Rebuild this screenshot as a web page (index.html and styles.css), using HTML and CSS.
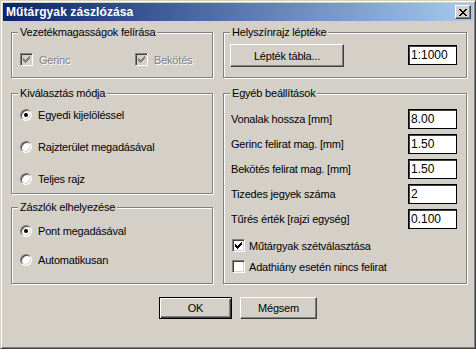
FILE: index.html
```html
<!DOCTYPE html>
<html lang="hu">
<head>
    <meta charset="UTF-8">
    <title>Műtárgyak zászlózása</title>
    <link rel="stylesheet" href="styles.css">
</head>
<body>
<div class="window">
    <div class="titlebar">
        <span class="title">Műtárgyak zászlózása</span>
        <button class="close" title="Bezárás">
            <svg width="8" height="7" viewBox="0 0 8 7">
                <path d="M0 0h2v1H0zM6 0h2v1H6zM1 1h2v1H1zM5 1h2v1H5zM2 2h4v1H2zM3 3h2v1H3zM2 4h4v1H2zM1 5h2v1H1zM5 5h2v1H5zM0 6h2v1H0zM6 6h2v1H6z" fill="#000"/>
            </svg>
        </button>
    </div>

    <div class="content">
        <div class="col left">
            <div class="group g-vezetek">
                <span class="caption">Vezetékmagasságok felírása</span>
                <div class="check-row">
                    <label class="check disabled"><span class="box"><svg class="tick" width="7" height="7" viewBox="0 0 7 7"><path d="M0 2h1v3H0zM1 3h1v3H1zM2 4h1v3H2zM3 3h1v3H3zM4 2h1v3H4zM5 1h1v3H5zM6 0h1v3H6z"/></svg></span>Gerinc</label>
                    <label class="check disabled"><span class="box"><svg class="tick" width="7" height="7" viewBox="0 0 7 7"><path d="M0 2h1v3H0zM1 3h1v3H1zM2 4h1v3H2zM3 3h1v3H3zM4 2h1v3H4zM5 1h1v3H5zM6 0h1v3H6z"/></svg></span>Bekötés</label>
                </div>
            </div>

            <div class="group g-kivalasztas">
                <span class="caption">Kiválasztás módja</span>
                <label class="radio"><span class="dot on"></span>Egyedi kijelöléssel</label>
                <label class="radio"><span class="dot"></span>Rajzterület megadásával</label>
                <label class="radio"><span class="dot"></span>Teljes rajz</label>
            </div>

            <div class="group g-zaszlok">
                <span class="caption">Zászlók elhelyezése</span>
                <label class="radio"><span class="dot on"></span>Pont megadásával</label>
                <label class="radio"><span class="dot"></span>Automatikusan</label>
            </div>
        </div>

        <div class="col right">
            <div class="group g-lepetek">
                <span class="caption">Helyszínrajz léptéke</span>
                <button class="btn btn-lepetek">Lépték tábla...</button>
                <input class="field" type="text" value="1:1000">
            </div>

            <div class="group g-egyeb">
                <span class="caption">Egyéb beállítások</span>
                <div class="row"><span>Vonalak hossza [mm]</span><input class="field" type="text" value="8.00"></div>
                <div class="row"><span>Gerinc felirat mag. [mm]</span><input class="field" type="text" value="1.50"></div>
                <div class="row"><span>Bekötés felirat mag. [mm]</span><input class="field" type="text" value="1.50"></div>
                <div class="row"><span>Tizedes jegyek száma</span><input class="field" type="text" value="2"></div>
                <div class="row"><span>Tűrés érték [rajzi egység]</span><input class="field" type="text" value="0.100"></div>
                <label class="check first"><span class="box"><svg class="tick" width="7" height="7" viewBox="0 0 7 7"><path d="M0 2h1v3H0zM1 3h1v3H1zM2 4h1v3H2zM3 3h1v3H3zM4 2h1v3H4zM5 1h1v3H5zM6 0h1v3H6z"/></svg></span>Műtárgyak szétválasztása</label>
                <label class="check"><span class="box"></span>Adathiány esetén nincs felirat</label>
            </div>
        </div>
    </div>

    <div class="buttons">
        <button class="btn default">OK</button>
        <button class="btn cancel">Mégsem</button>
    </div>
</div>
</body>
</html>
```

FILE: styles.css
```css
body {
    margin: 0;
    padding: 0;
    font-family: "Liberation Sans", Arial, sans-serif;
    font-size: 11px;
    letter-spacing: -0.2px;
    color: #000;
    background-color: #d4d0c8;
}

.window {
    width: 476px;
    height: 349px;
    box-sizing: border-box;
    padding: 2px;
    background-color: #d4d0c8;
    border: 1px solid;
    border-color: #d4d0c8 #404040 #404040 #d4d0c8;
    box-shadow: inset 1px 1px 0 #fff, inset -1px -1px 0 #808080;
}

.titlebar {
    height: 18px;
    display: flex;
    align-items: center;
    justify-content: space-between;
    background: linear-gradient(to right, #0a246a, #a6caf0);
}

.title {
    color: #fff;
    font-weight: bold;
    font-size: 12px;
    letter-spacing: 0.1px;
    padding-left: 3px;
}

.close {
    width: 16px;
    height: 14px;
    margin-right: 2px;
    padding: 0;
    display: flex;
    align-items: center;
    justify-content: center;
    background-color: #d4d0c8;
    border: 1px solid;
    border-color: #fff #404040 #404040 #fff;
    box-shadow: inset -1px -1px 0 #808080;
}

.content {
    display: flex;
    gap: 10px;
    padding: 11px 0 0 8px;
}

.col {
    display: flex;
    flex-direction: column;
}

.left {
    width: 202px;
    gap: 15px;
}

.right {
    width: 244px;
    gap: 15px;
}

/* etched group box */
.group {
    position: relative;
    box-sizing: border-box;
    border: 1px solid #808080;
    box-shadow: inset 1px 1px 0 #fff, 1px 1px 0 #fff;
}

.caption {
    position: absolute;
    top: -7px;
    left: 6px;
    padding: 0 2px;
    line-height: 13px;
    background-color: #d4d0c8;
}

.g-vezetek {
    height: 46px;
    padding: 20px 0 0 8px;
}

.check-row {
    display: grid;
    grid-template-columns: 115px auto;
}

.g-kivalasztas {
    height: 101px;
    margin-bottom: -2px;
    padding: 13px 0 0 8px;
    display: flex;
    flex-direction: column;
    gap: 16px;
}

.g-zaszlok {
    height: 77px;
    padding: 15px 0 0 8px;
    display: flex;
    flex-direction: column;
    gap: 13px;
}

.radio {
    display: flex;
    align-items: center;
    gap: 6px;
    height: 16px;
}

.dot {
    position: relative;
    width: 10px;
    height: 10px;
    border-radius: 50%;
    background-color: #fff;
    border: 1px solid;
    border-color: #808080 #fff #fff #808080;
    box-shadow: inset 1px 1px 0 #404040, inset -1px -1px 0 #d4d0c8;
}

.dot.on::after {
    content: "";
    position: absolute;
    left: 3px;
    top: 3px;
    width: 4px;
    height: 4px;
    border-radius: 50%;
    background-color: #000;
}

.check {
    display: flex;
    align-items: center;
    gap: 6px;
    height: 13px;
}

.box {
    width: 11px;
    height: 11px;
    display: flex;
    align-items: center;
    justify-content: center;
    background-color: #fff;
    border: 1px solid;
    border-color: #808080 #fff #fff #808080;
    box-shadow: inset 1px 1px 0 #404040, inset -1px -1px 0 #d4d0c8;
}

.tick {
    fill: #000;
}

.check.disabled {
    color: #808080;
    text-shadow: 1px 1px 0 #fff;
}

.check.disabled .box {
    background-color: #d4d0c8;
}

.check.disabled .tick {
    fill: #808080;
}

.g-lepetek {
    height: 46px;
    padding: 0 9px 0 6px;
    display: flex;
    align-items: center;
    justify-content: space-between;
}

.g-lepetek .btn-lepetek {
    width: 114px;
    height: 23px;
    margin-top: 1px;
}

.g-egyeb {
    height: 191px;
    padding: 15px 9px 0 7px;
    display: flex;
    flex-direction: column;
    gap: 5px;
}

.row {
    display: flex;
    align-items: center;
    justify-content: space-between;
    height: 20px;
}

.field {
    width: 49px;
    height: 20px;
    box-sizing: border-box;
    margin: 0;
    padding: 0 2px;
    font-family: "Liberation Sans", Arial, sans-serif;
    font-size: 12px;
    letter-spacing: 0;
    background-color: #fff;
    border: 1px solid #000;
    box-shadow: inset 1px 1px 0 #404040;
    outline: none;
}

.g-egyeb .check {
    margin-left: 1px;
    gap: 4px;
}

.g-egyeb .check.first {
    margin-top: 5px;
    margin-bottom: 3px;
}

.btn {
    box-sizing: border-box;
    padding: 0;
    font-family: "Liberation Sans", Arial, sans-serif;
    font-size: 11px;
    letter-spacing: -0.2px;
    color: #000;
    background-color: #d4d0c8;
    border: 1px solid;
    border-color: #fff #404040 #404040 #fff;
    box-shadow: inset -1px -1px 0 #808080;
}

.buttons {
    display: flex;
    gap: 8px;
    padding: 13px 0 0 156px;
}

.buttons .btn {
    width: 73px;
    height: 22px;
}

.buttons .btn.cancel {
    width: 77px;
}

.btn.default {
    border: 1px solid #000;
    box-shadow: inset 1px 1px 0 #fff, inset -1px -1px 0 #404040, inset -2px -2px 0 #808080;
}
```
